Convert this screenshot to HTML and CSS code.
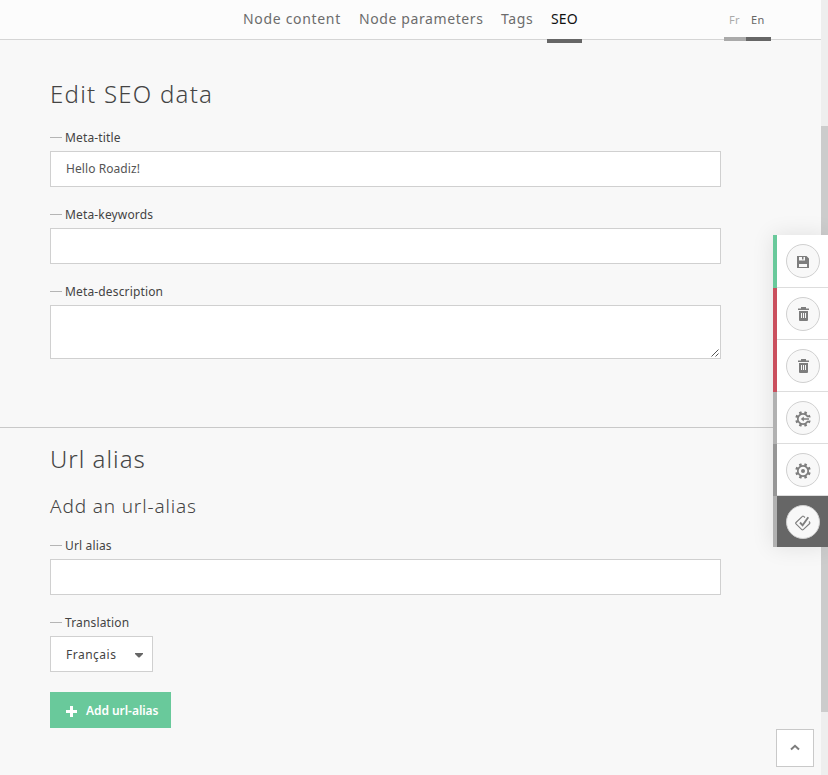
FILE: index.html
```html
<!DOCTYPE html>
<html lang="en">
<head>
<meta charset="utf-8">
<title>Edit SEO data</title>
<link rel="stylesheet" href="styles.css">
</head>
<body>
<svg width="0" height="0" class="defs">
  <defs>
    <symbol id="trash" viewBox="0 0 11 14"><path d="M0 1.500h3V0h5v1.500h3V3H0zM1 4h9v9q0 1-1 1H2q-1 0-1-1z"/><path d="M3.500 6v5M5.500 6v5M7.500 6v5" stroke="#f8f8f8" stroke-width="1" fill="none"/></symbol>
    <symbol id="gear" viewBox="0 0 16 16"><circle cx="8" cy="8" r="5.200" fill="none" stroke="#7d7d7d" stroke-width="1.700"/><g stroke="#7d7d7d" stroke-width="2.600"><path d="M5.900 3L5 .8M10.100 3L11 .8M5.900 13L5 15.200M10.100 13l.9 2.200M3 5.900L.8 5M3 10.100L.8 11M13 5.900l2.200-.9M13 10.100l2.200.9"/></g></symbol>
  </defs>
</svg>
<header class="topbar">
  <nav class="tabs">
    <a class="tab tab-content">Node content</a>
    <a class="tab tab-params">Node parameters</a>
    <a class="tab tab-tags">Tags</a>
    <a class="tab tab-seo active">SEO</a>
  </nav>
  <nav class="languages"><a class="lang fr">Fr</a><a class="lang en">En</a></nav>
</header>
<main>
  <section class="panel seo">
    <h1>Edit SEO data</h1>
    <div class="field"><label for="title">Meta-title</label><input id="title" value="Hello Roadiz!"></div>
    <div class="field"><label for="keywords">Meta-keywords</label><input id="keywords"></div>
    <div class="field"><label for="description">Meta-description</label><div class="area"><textarea id="description"></textarea><svg class="grip" width="8" height="8" viewBox="0 0 8 8"><path d="M.5 7.500l7-7M4.500 7.500l3-3"/></svg></div></div>
  </section>
  <section class="panel alias">
    <h1>Url alias</h1>
    <h2>Add an url-alias</h2>
    <div class="field"><label for="alias">Url alias</label><input id="alias"></div>
    <div class="field"><label>Translation</label><div class="select"><span>Français</span><svg width="8" height="5" viewBox="0 0 8 5"><path d="M0 0h8v1L4.500 4.500h-1L0 1z"/></svg></div></div>
    <button class="add"><svg width="11" height="11" viewBox="0 0 11 11"><path d="M4 0h3v4h4v3H7v4H4V7H0V4h4z"/></svg><span>Add url-alias</span></button>
  </section>
</main>
<div class="scrollbar"><div class="thumb"></div></div>
<aside class="actions">
  <a class="action save"><span class="disc"><svg width="12" height="12" viewBox="0 0 12 12"><path fill-rule="evenodd" d="M0 0h9.500L12 2.500V12H0zM2 1v3.500h6V1H6.500v2.500H5V1zM2 8v3h8V8z"/></svg></span></a>
  <a class="action danger"><span class="disc"><svg width="11" height="14"><use href="#trash"/></svg></span></a>
  <a class="action danger"><span class="disc"><svg width="11" height="14"><use href="#trash"/></svg></span></a>
  <a class="action light"><span class="disc"><svg width="16" height="16" viewBox="0 0 16 16"><use href="#gear"/><path class="gap" d="M11.500 6.300h3v3.400h-3z"/><path d="M5.800 8l3-2.500v1.700H14v1.600H8.800v1.700z"/></svg></span></a>
  <a class="action medium"><span class="disc"><svg width="16" height="16" viewBox="0 0 16 16"><use href="#gear"/><circle cx="8" cy="8" r="2"/></svg></span></a>
  <a class="action dark"><span class="disc"><svg class="check" width="16" height="16" viewBox="0 0 16 16"><path d="M10 2.500L8.600 1.300Q8 .8 7.400 1.300L1 7.500q-.7.700 0 1.400l5.800 5.700q.7.600 1.400 0L14.700 8.500q.5-.6 0-1.200l-.8-.8"/><path class="tick" d="M5 7.500l2.600 2.800 5.700-8"/></svg></span></a>
</aside>
<a class="to-top"><svg width="10" height="7" viewBox="0 0 10 7"><path d="M1 5.500L5 1.800l4 3.700"/></svg></a>
</body>
</html>
```
FILE: styles.css
```css
* { box-sizing: border-box; }
body { margin: 0; height: 775px; overflow: hidden; background: #f8f8f8; color: #444; font: 12px/16px "Noto Sans", sans-serif; }
.defs { position: absolute; }
svg { display: block; flex: none; }
.topbar { height: 40px; background: #fcfcfc; border-bottom: 1px solid #d5d5d5; padding-left: 239px; display: flex; }
.tabs { display: flex; gap: 10px; }
.tab { height: 43px; padding: 9px 4px 0; font-size: 14px; line-height: 20px; letter-spacing: .63px; color: #6c6c6c; white-space: nowrap; }
.tab-content { width: 106px; letter-spacing: .68px; }
.tab-params { width: 132px; letter-spacing: .6px; }
.tab-tags { width: 40px; }
.tab-seo { width: 35px; letter-spacing: .1px; }
.active { color: #111; border-bottom: 4px solid #666; }
.languages { display: flex; margin-left: 142px; }
.lang { height: 41px; padding: 12px 5px 0; font-size: 11px; border-bottom: 4px solid #aaa; color: #aaa; letter-spacing: .4px; }
.fr { width: 22px; }
.en { width: 25px; color: #666; border-color: #666; }
.panel { padding-left: 50px; }
.seo { height: 388px; padding-top: 38px; border-bottom: 1px solid #c9c9c9; }
h1, h2 { margin: 0; font-weight: 300; white-space: nowrap; }
h1 { font-size: 24px; line-height: 32px; letter-spacing: 1.25px; }
h2 { font-size: 19px; line-height: 26px; letter-spacing: .85px; margin: 18px 0 19px; }
.alias { padding-top: 15px; }
.alias h1 { letter-spacing: 1px; }
.seo h1 { margin-bottom: 20px; }
.field { margin-bottom: 20px; }
label { display: flex; align-items: center; gap: 3px; height: 16px; margin-bottom: 5px; letter-spacing: .15px; }
label::before { content: ""; width: 12px; height: 1px; margin-bottom: 1px; background: #b5b5b5; }
input, textarea { display: block; width: 671px; height: 36px; padding: 0 15px 2px; margin: 0; background: #fff; border: 1px solid #d0d0d0; border-radius: 0; color: #555; font: inherit; letter-spacing: .07px; outline: 0; }
textarea { height: 54px; resize: none; }
.area { position: relative; width: 671px; }
.grip { position: absolute; right: 2px; bottom: 2px; fill: none; stroke: #555; stroke-width: 1; }
.select { width: 103px; height: 36px; padding: 0 9px 0 15px; border: 1px solid #d0d0d0; background: #fff; display: flex; align-items: center; justify-content: space-between; letter-spacing: .5px; }
.select span { margin-top: 1px; }
.select svg { fill: #666; margin-top: 2px; }
.add { display: flex; align-items: center; gap: 9px; margin-top: 20px; width: 121px; height: 36px; padding: 0 0 0 16px; border: 0; background: #69c99b; color: #fff; font: 600 12px/16px "Noto Sans", sans-serif; letter-spacing: -.05px; white-space: nowrap; }
.add span { margin-top: 1px; }
.add svg { fill: #fff; margin-top: 2px; }
.scrollbar { position: fixed; right: 0; top: 0; width: 7px; height: 775px; padding-top: 126px; background: #eee; }
.thumb { height: 586px; background: #ccc; }
.actions { position: fixed; right: 0; top: 235px; width: 55px; box-shadow: 0 0 22px rgba(0,0,0,.1); background: #ddd; }
.action { height: 52px; display: flex; align-items: center; padding-left: 9px; border-left: 4px solid; background: #fff; background-clip: padding-box; box-shadow: inset 0 -1px #ddd; }
.save { height: 53px; padding-bottom: 1px; }
.save { border-color: #69c99b; }
.danger { border-color: #ca4f5d; }
.light { border-color: #b1b1b1; }
.medium { border-color: #969696; }
.dark { height: 51px; padding-top: 1px; border-color: #b1b1b1; background: #666; box-shadow: none; }
.disc { width: 34px; height: 34px; border: 1px solid #d0d0d0; border-radius: 50%; background: #f8f8f8; display: flex; align-items: center; justify-content: center; fill: #7d7d7d; }
.disc svg { margin-top: 1px; }
.danger .disc svg { margin: 0 0 0 1px; }
.save .disc svg { margin-top: 2px; }
.gap { fill: #f8f8f8; }
.check { fill: none; stroke: #7d7d7d; stroke-width: 1.1; }
.tick { stroke-width: 1.9; }
.to-top { position: fixed; left: 776px; top: 729px; width: 38px; height: 38px; border: 1px solid #c9c9c9; background: #fff; display: flex; align-items: center; justify-content: center; }
.to-top svg { fill: none; stroke: #7d7d7d; stroke-width: 2; margin-bottom: 1px; }
```
